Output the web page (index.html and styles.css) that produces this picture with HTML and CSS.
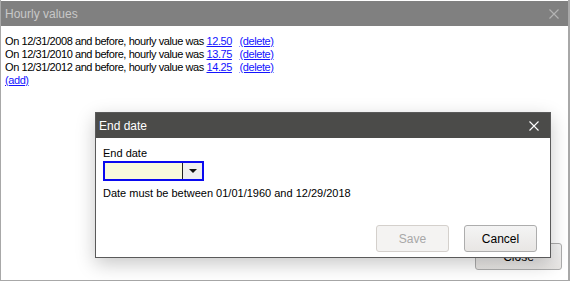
FILE: index.html
```html
<!DOCTYPE html>
<html lang="en">
<head>
  <meta charset="UTF-8" />
  <title>Hourly values</title>
  <link rel="stylesheet" href="styles.css">
</head>
<body>
  <div class="window">
    <div class="titlebar inactive">
      <span class="title">Hourly values</span>
      <svg class="close" width="10" height="10" viewBox="0 0 10 10"><path d="M0.5 0.5 L9.5 9.5 M9.5 0.5 L0.5 9.5" stroke="currentColor" stroke-width="1.1"/></svg>
    </div>
    <div class="content">
      <div class="row">On 12/31/2008 and before, hourly value was <a href="#">12.50</a> <a href="#">(delete)</a></div>
      <div class="row">On 12/31/2010 and before, hourly value was <a href="#">13.75</a> <a href="#">(delete)</a></div>
      <div class="row">On 12/31/2012 and before, hourly value was <a href="#">14.25</a> <a href="#">(delete)</a></div>
      <div class="row"><a href="#">(add)</a></div>
    </div>
    <div class="footer">
      <button class="btn">Close</button>
    </div>
  </div>

  <div class="dialog">
    <div class="titlebar">
      <span class="title">End date</span>
      <svg class="close" width="10" height="10" viewBox="0 0 10 10"><path d="M0.5 0.5 L9.5 9.5 M9.5 0.5 L0.5 9.5" stroke="currentColor" stroke-width="1.1"/></svg>
    </div>
    <div class="dialog-body">
      <label>End date</label>
      <div class="combo">
        <span class="combo-text"></span>
        <span class="combo-arrow"></span>
      </div>
      <div class="hint">Date must be between 01/01/1960 and 12/29/2018</div>
    </div>
    <div class="buttons">
      <button class="btn" disabled>Save</button>
      <button class="btn">Cancel</button>
    </div>
  </div>
</body>
</html>
```

FILE: styles.css
```css
body {
  margin: 0;
  width: 570px;
  height: 281px;
  overflow: hidden;
  background: #fff;
  font-family: "Liberation Sans", Arial, sans-serif;
  font-size: 11px;
  position: relative;
}
.window {
  box-sizing: border-box;
  width: 570px;
  height: 281px;
  border-left: 1px solid #a8a8a8;
  border-right: 2px solid #a8a8a8;
  border-bottom: 1px solid #a8a8a8;
  padding-top: 1px;
  display: flex;
  flex-direction: column;
}
.titlebar {
  height: 25px;
  background: #4b4b49;
  color: #fff;
  display: flex;
  align-items: center;
  justify-content: space-between;
  padding: 0 11px 0 4px;
  font-size: 12px;
}
.titlebar.inactive {
  background: #808080;
  color: #c8c8c8;
  padding-right: 9px;
}
.titlebar.inactive .close {
  color: #b4b4b4;
}
.content {
  padding: 9px 4px 0;
}
.row {
  line-height: 13px;
  letter-spacing: -0.42px;
  white-space: pre;
}
.row a {
  color: #1414ff;
}
.row a + a {
  margin-left: 5px;
}
.footer {
  margin-top: auto;
  display: flex;
  justify-content: flex-end;
  padding: 0 6px 10px 0;
}
.btn {
  width: 87px;
  height: 27px;
  border: 1px solid #adadad;
  border-radius: 3px;
  background: linear-gradient(#f4f4f4, #e8e6e4);
  font-family: "Liberation Sans", Arial, sans-serif;
  font-size: 12px;
  color: #000;
  padding: 0;
}
.btn:disabled {
  color: #a8a8a8;
  border-color: #d4d0cc;
  background: #f4f3f2;
}
.dialog {
  position: absolute;
  left: 95px;
  top: 112px;
  width: 454px;
  height: 144px;
  border: 1px solid #5a5a5a;
  background: #fff;
  box-shadow: 0 6px 18px rgba(0, 0, 0, 0.22);
  display: flex;
  flex-direction: column;
}
.dialog .titlebar {
  padding-left: 3px;
}
.dialog-body {
  padding: 9px 7px 0;
  display: flex;
  flex-direction: column;
  align-items: flex-start;
}
.dialog-body label {
  line-height: 13px;
}
.combo {
  margin-top: 1px;
  width: 97px;
  height: 16px;
  border: 2px solid #0a0af0;
  display: flex;
}
.combo-text {
  flex: 1;
  background: #f8fadc;
  border-right: 1px solid #222;
}
.combo-arrow {
  width: 19px;
  background: #efefef;
  position: relative;
}
.combo-arrow::after {
  content: "";
  position: absolute;
  left: 6px;
  top: 6px;
  border-left: 4px solid transparent;
  border-right: 4px solid transparent;
  border-top: 4px solid #111;
}
.hint {
  margin-top: 6px;
  line-height: 13px;
}
.buttons {
  margin-top: auto;
  display: flex;
  justify-content: flex-end;
  gap: 15px;
  padding: 0 13px 5px 0;
}
.buttons .btn {
  width: 73px;
}
```
